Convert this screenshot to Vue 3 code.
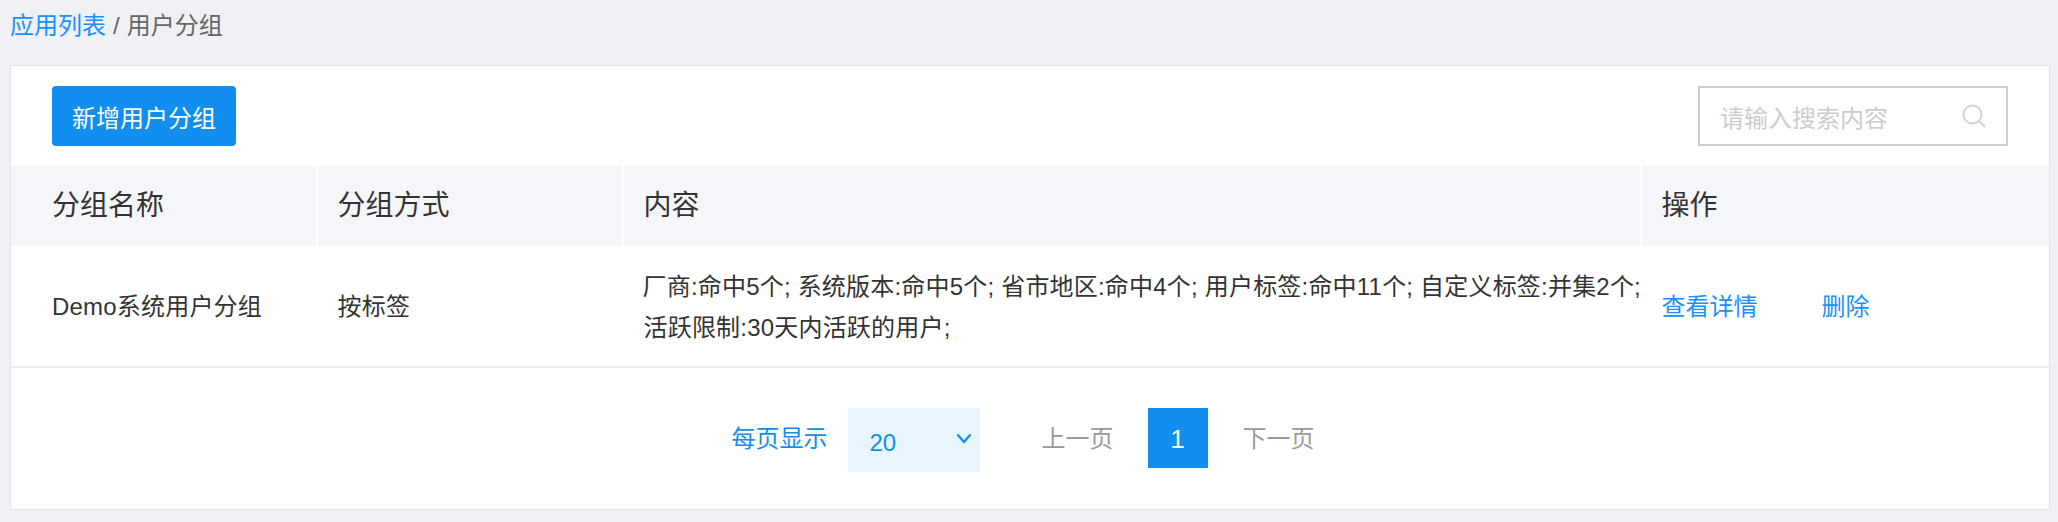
<template>
  <div class="page">
    <div class="crumb">
      <a class="crumb-link">应用列表</a>
      <span class="crumb-sep">/</span>
      <span class="crumb-now">用户分组</span>
    </div>

    <div class="card">
      <div class="toolbar">
        <button class="add-btn">新增用户分组</button>
        <div class="search">
          <span class="search-text">请输入搜索内容</span>
          <svg class="search-icon" viewBox="0 0 24 24" fill="none" stroke="#d2d2d2" stroke-width="2">
            <circle cx="10.5" cy="10.5" r="9" />
            <path d="M17 17l6 6" />
          </svg>
        </div>
      </div>

      <div class="head">
        <div v-for="col in columns" :key="col" class="head-cell">{{ col }}</div>
      </div>

      <div class="row">
        <div class="cell">Demo系统用户分组</div>
        <div class="cell">按标签</div>
        <div class="cell cell-content">
          厂商:命中5个; 系统版本:命中5个; 省市地区:命中4个; 用户标签:命中11个; 自定义标签:并集2个; 活跃限制:30天内活跃的用户;
        </div>
        <div class="cell cell-actions">
          <a class="action">查看详情</a>
          <a class="action">删除</a>
        </div>
      </div>

      <div class="pager">
        <span class="pager-label">每页显示</span>
        <div class="page-size">
          <span>20</span>
          <svg class="chevron" viewBox="0 0 16 11" fill="none" stroke="#1a8cf0" stroke-width="2.4">
            <path d="M1.5 1.5L8 9l6.5-7.5" />
          </svg>
        </div>
        <span class="page-link prev">上一页</span>
        <span class="page-num">1</span>
        <span class="page-link next">下一页</span>
      </div>
    </div>
  </div>
</template>

<script setup>
const columns = ['分组名称', '分组方式', '内容', '操作']
</script>

<style>
body {
  margin: 0;
  background: #f0f1f5;
}
</style>

<style scoped>
.page {
  height: 522px;
  box-sizing: border-box;
  padding: 0 8px 0 10px;
  background: #f0f1f5;
  font-family: "Liberation Sans", "Noto Sans CJK SC", sans-serif;
  color: #333;
  overflow: hidden;
}

.crumb {
  height: 65px;
  padding-top: 8px;
  box-sizing: border-box;
  display: flex;
  align-items: flex-start;
  gap: 7px;
  font-size: 24px;
  line-height: 36px;
  color: #666;
}

.crumb-link { color: #1890ff; }

.card {
  height: 445px;
  box-sizing: border-box;
  border: 1.5px solid #e4e5e8;
  background: #fff;
}

.toolbar {
  height: 100px;
  box-sizing: border-box;
  padding: 20px 41px 0 41px;
  display: flex;
  justify-content: space-between;
  align-items: flex-start;
}

.add-btn {
  width: 184px;
  height: 60px;
  border: 0;
  border-radius: 4px;
  background: #118eef;
  color: #fff;
  font-family: inherit;
  font-size: 24px;
}

.search {
  width: 310px;
  height: 60px;
  box-sizing: border-box;
  border: 2px solid #ccc;
  padding: 0 20px 0 20px;
  display: flex;
  align-items: center;
  justify-content: space-between;
}

.search-text {
  font-size: 24px;
  color: #ccc;
}

.search-icon {
  width: 24px;
  height: 24px;
}

.head,
.row {
  display: grid;
  grid-template-columns: 306.5px 306px 1018px 1fr;
}

.head {
  height: 80px;
}

.head-cell {
  padding-left: 41px;
  background: #f5f6fa;
  border-right: 2px solid #fff;
  font-size: 28px;
  line-height: 80px;
}

.head-cell:nth-child(2),
.head-cell:nth-child(3),
.head-cell:nth-child(4) { padding-left: 20px; }

.head-cell:last-child { border-right: 0; }

.row {
  height: 122px;
  box-sizing: border-box;
  padding-top: 2px;
  border-bottom: 2px solid #ebedf2;
  align-items: center;
}

.cell {
  padding-left: 41px;
  font-size: 24px;
  line-height: 40px;
  letter-spacing: 0.2px;
}

.cell:nth-child(2),
.cell:nth-child(3),
.cell:nth-child(4) { padding-left: 20px; }

.cell-content {
  line-height: 41px;
  text-indent: -1px;
}

.cell-actions {
  display: flex;
  gap: 64px;
  letter-spacing: 0;
}

.action { color: #1890ff; }

.pager {
  height: 141px;
  box-sizing: border-box;
  padding: 40px 14px 0 0;
  display: flex;
  justify-content: center;
  align-items: flex-start;
  font-size: 24px;
  line-height: 62px;
}

.pager-label {
  color: #118eef;
  margin-right: 20px;
}

.page-size {
  width: 132px;
  height: 64px;
  box-sizing: border-box;
  padding: 4px 8px 0 22px;
  background: #e8f5fd;
  color: #118eef;
  display: flex;
  justify-content: space-between;
  align-items: flex-start;
}

.chevron {
  width: 16px;
  height: 11px;
  margin-top: 21px;
}

.page-link { color: #999; }
.prev { margin: 0 34px 0 62px; }
.next { margin-left: 35px; }

.page-num {
  width: 60px;
  height: 60px;
  background: #118eef;
  color: #fff;
  text-align: center;
  font-size: 26px;
}
</style>
